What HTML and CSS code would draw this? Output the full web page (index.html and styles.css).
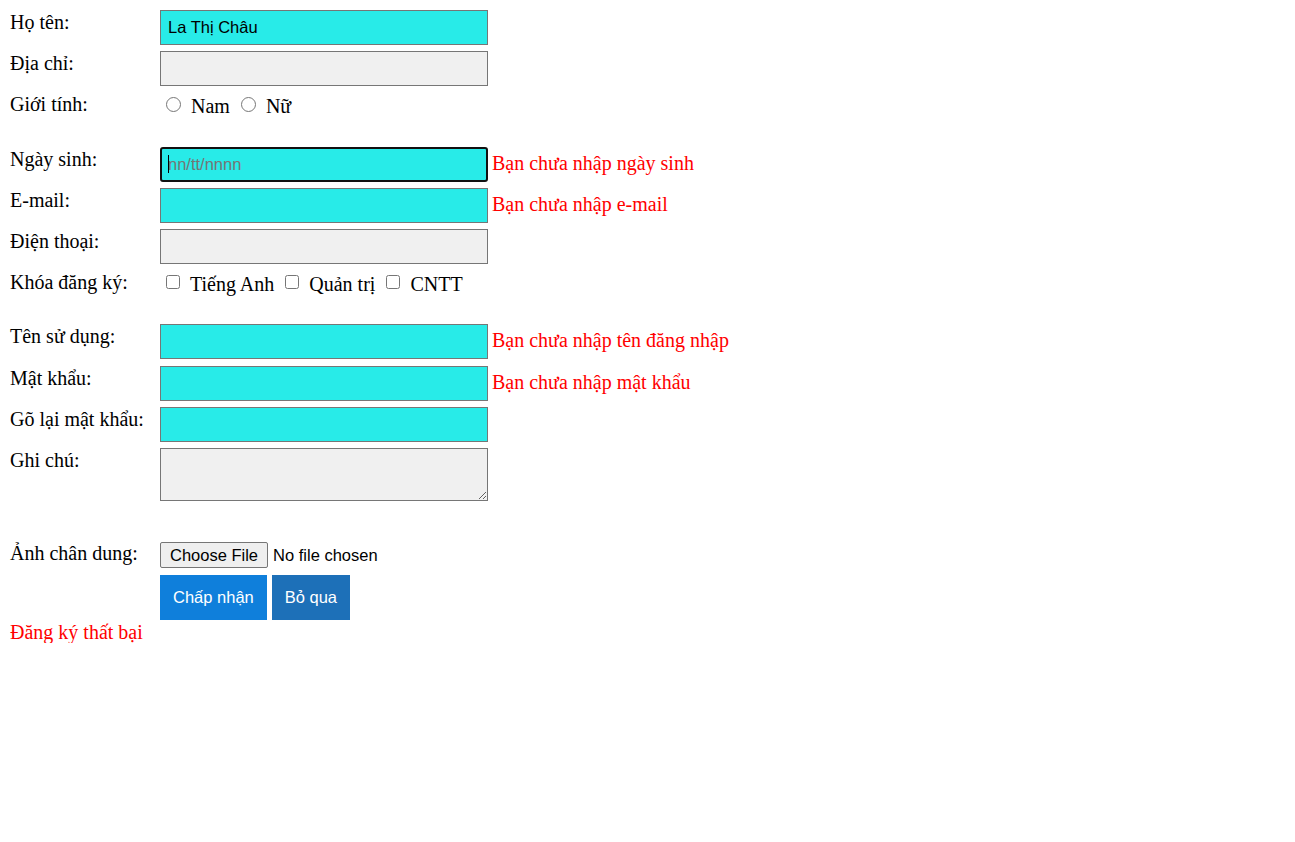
FILE: index.html
```html
<!DOCTYPE html>
<html lang="vi">
<head>
<meta charset="utf-8">
<title>Đăng ký</title>
<link rel="stylesheet" href="styles.css">
</head>
<body>
<form class="form">
  <div class="row">
    <div class="label">Họ tên:</div>
    <div class="field"><input class="inp cyan" type="text" value="La Thị Châu"></div>
  </div>
  <div class="row">
    <div class="label">Địa chỉ:</div>
    <div class="field"><input class="inp gray" type="text"></div>
  </div>
  <div class="row row-opts">
    <div class="label">Giới tính:</div>
    <div class="field opts">
      <input class="radio first" type="radio" name="gt"><span class="opt-text">Nam</span>
      <input class="radio" type="radio" name="gt"><span class="opt-text">Nữ</span>
    </div>
  </div>
  <div class="row">
    <div class="label">Ngày sinh:</div>
    <div class="field">
      <span class="caret-wrap"><input class="inp cyan focused" type="text" placeholder="nn/tt/nnnn"><span class="caret"></span></span>
      <span class="err">Bạn chưa nhập ngày sinh</span>
    </div>
  </div>
  <div class="row">
    <div class="label">E-mail:</div>
    <div class="field"><input class="inp cyan" type="text"><span class="err">Bạn chưa nhập e-mail</span></div>
  </div>
  <div class="row">
    <div class="label">Điện thoại:</div>
    <div class="field"><input class="inp gray" type="text"></div>
  </div>
  <div class="row row-opts row-checks">
    <div class="label">Khóa đăng ký:</div>
    <div class="field opts">
      <input class="check first" type="checkbox"><span class="opt-text">Tiếng Anh</span>
      <input class="check" type="checkbox"><span class="opt-text">Quản trị</span>
      <input class="check" type="checkbox"><span class="opt-text">CNTT</span>
    </div>
  </div>
  <div class="row row-user">
    <div class="label">Tên sử dụng:</div>
    <div class="field"><input class="inp cyan" type="text"><span class="err">Bạn chưa nhập tên đăng nhập</span></div>
  </div>
  <div class="row">
    <div class="label">Mật khẩu:</div>
    <div class="field"><input class="inp cyan" type="password"><span class="err">Bạn chưa nhập mật khẩu</span></div>
  </div>
  <div class="row">
    <div class="label">Gõ lại mật khẩu:</div>
    <div class="field"><input class="inp cyan" type="password"></div>
  </div>
  <div class="row row-note">
    <div class="label">Ghi chú:</div>
    <div class="field"><textarea class="note"></textarea></div>
  </div>
  <div class="row row-file">
    <div class="label">Ảnh chân dung:</div>
    <div class="field"><input class="file" type="file"></div>
  </div>
  <div class="row row-btns">
    <div class="label"></div>
    <div class="field btns">
      <button class="btn btn-ok" type="button">Chấp nhận</button>
      <button class="btn btn-skip" type="button">Bỏ qua</button>
    </div>
  </div>
  <div class="result">Đăng ký thất bại</div>
</form>
</body>
</html>
```
FILE: styles.css
```css
html, body {
  margin: 0;
  padding: 0;
  background: #fff;
}

body {
  font-family: "Liberation Serif", "Times New Roman", serif;
  font-size: 20px;
  color: #000;
}

.form {
  padding: 10px 0 0 10px;
}

.row {
  display: flex;
  align-items: flex-start;
  margin-bottom: 6px;
}

.label {
  width: 150px;
  flex: none;
  font-size: 20px;
  line-height: 22px;
  padding-top: 1px;
}

.field {
  display: flex;
  align-items: baseline;
}

.inp {
  box-sizing: border-box;
  width: 328px;
  height: 35px;
  margin: 0;
  padding: 0 7px;
  border: 1px solid #767676;
  border-radius: 0;
  font-family: "Liberation Sans", Arial, sans-serif;
  font-size: 16.5px;
  color: #000;
  outline: none;
}

.cyan {
  background: #28ebe8;
}

.gray {
  background: #f0f0f0;
}

.focused {
  border: 2px solid #111;
  border-radius: 3px;
  padding-left: 6px;
}

.focused::placeholder {
  color: #757575;
}

.caret-wrap {
  position: relative;
  display: inline-flex;
}

.caret {
  position: absolute;
  left: 8px;
  top: 8px;
  width: 1px;
  height: 18px;
  background: #000;
}

.err {
  margin-left: 4px;
  color: #ff0000;
  font-size: 20px;
}

/* radio / checkbox rows */
.row-opts {
  height: 49px;
}

.row-opts .label {
  padding-top: 1px;
}

.opts {
  align-items: center;
  padding-top: 3px;
  line-height: 22px;
}

.radio,
.check {
  width: 15px;
  height: 15px;
  margin: 0 10px 0 11px;
  flex: none;
  position: relative;
  top: -2px;
}

.radio.first,
.check.first {
  margin-left: 6px;
}

.check {
  width: 14px;
  height: 14px;
}

.row-checks {
  height: 48px;
}

.row-user {
  margin-bottom: 7px;
}

/* textarea */
.note {
  box-sizing: border-box;
  width: 328px;
  height: 53px;
  margin: 0;
  border: 1px solid #767676;
  background: #f0f0f0;
  font-family: "Liberation Mono", monospace;
  font-size: 13px;
}

.row-note {
  margin-bottom: 41px;
}

/* file input */
.row-file {
  margin-bottom: 7px;
}

.row-file .label {
  padding-top: 0;
}

.file {
  font-family: "Liberation Sans", Arial, sans-serif;
  font-size: 16.5px;
  color: #000;
  height: 26px;
  margin: 0;
  padding: 0;
}

.file::file-selector-button {
  font-family: "Liberation Sans", Arial, sans-serif;
  font-size: 16.5px;
  height: 26px;
  margin: 0 5px 0 0;
  padding: 0 9px;
  border: 1px solid #767676;
  border-radius: 2px;
  background: #efefef;
  color: #000;
}

/* buttons */
.row-btns {
  margin-bottom: 0;
}

.btns {
  gap: 5px;
}

.btn {
  height: 45px;
  margin: 0;
  padding: 0 13px;
  border: 0;
  border-radius: 0;
  color: #fff;
  font-family: "Liberation Sans", Arial, sans-serif;
  font-size: 16.5px;
}

.btn-ok {
  background: #0f7fdb;
}

.btn-skip {
  background: #1d70b8;
}

.result {
  color: #ff0000;
  font-size: 20px;
  line-height: 22px;
  margin-top: 1px;
}
```
